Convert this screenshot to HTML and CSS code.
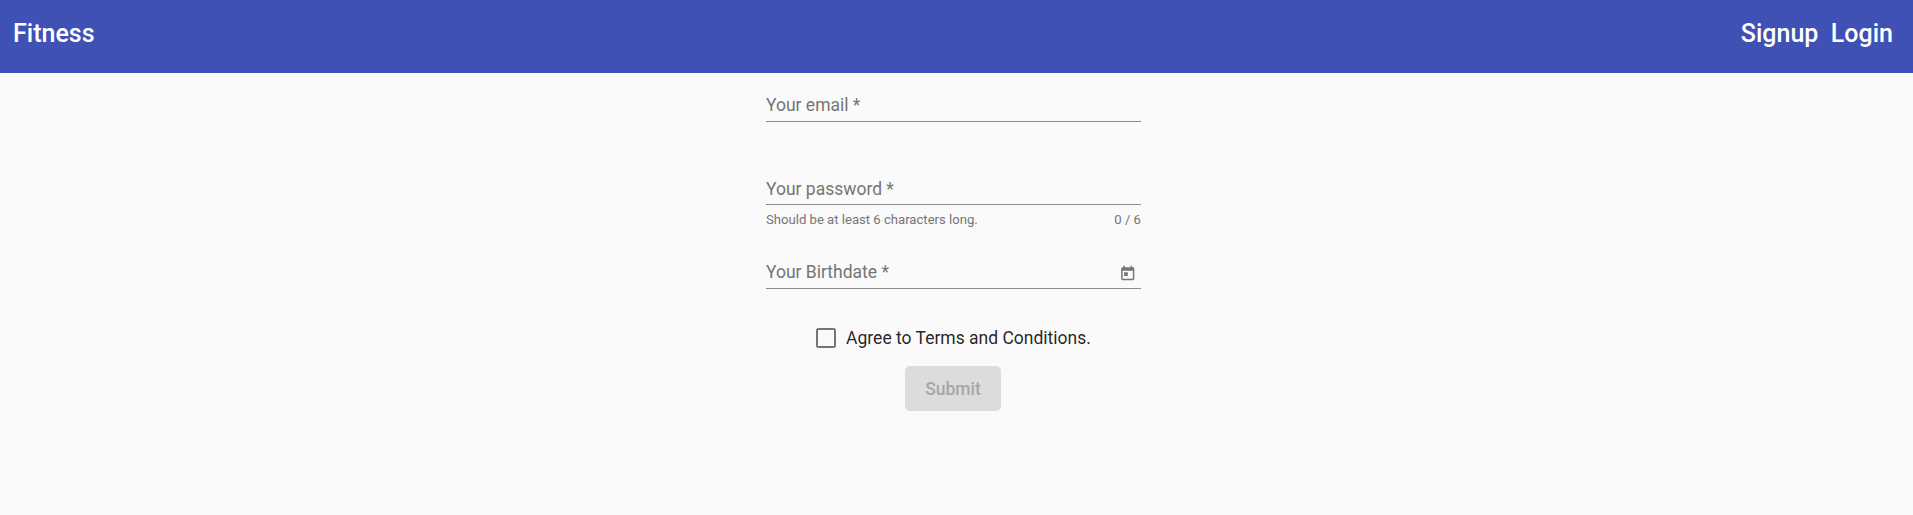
FILE: index.html
```html
<!DOCTYPE html>
<html lang="en">
<head>
<meta charset="utf-8">
<title>Fitness</title>
<link rel="stylesheet" href="styles.css">
</head>
<body>
<header class="toolbar">
  <a class="brand">Fitness</a>
  <nav class="links"><a>Signup</a><a>Login</a></nav>
</header>
<main>
  <form class="form">
    <div class="field">
      <div class="control"><label>Your email *</label></div>
      <div class="hints"></div>
    </div>
    <div class="field password">
      <div class="control"><label>Your password *</label></div>
      <div class="hints"><span>Should be at least 6 characters long.</span><span>0 / 6</span></div>
    </div>
    <div class="field">
      <div class="control">
        <label>Your Birthdate *</label>
        <svg class="calendar" viewBox="0 0 24 24"><path d="M19 3h-1V1h-2v2H8V1H6v2H5c-1.11 0-1.99.9-1.99 2L3 19c0 1.1.89 2 2 2h14c1.1 0 2-.9 2-2V5c0-1.1-.9-2-2-2zm0 16H5V8h14v11zM7 10h5v5H7z"/></svg>
      </div>
    </div>
    <label class="terms"><span class="box"></span><span>Agree to Terms and Conditions.</span></label>
    <button class="submit" type="button" disabled>Submit</button>
  </form>
</main>
</body>
</html>
```
FILE: styles.css
```css
* { box-sizing: border-box; }
body {
  margin: 0;
  min-height: 100vh;
  background: #fafafa;
  font-family: Roboto, "Liberation Sans", sans-serif;
  font-size: 17.5px;
  line-height: 20px;
}
.toolbar {
  display: flex;
  justify-content: space-between;
  height: 73px;
  padding: 19px 20px 0 13px;
  background: #3f51b5;
  color: #fff;
  font-size: 25px;
  font-weight: 500;
  line-height: 30px;
}
.links { display: flex; gap: 12.5px; }
.form {
  display: flex;
  flex-direction: column;
  align-items: center;
  width: 375px;
  margin: 0 0 0 766px;
  padding-top: 22px;
}
.field { width: 100%; color: #757575; }
.control {
  display: flex;
  justify-content: space-between;
  height: 27px;
  border-bottom: 1px solid #8c8c8c;
}
.password .control { padding-top: 1px; }
.calendar {
  width: 17.5px;
  height: 17.5px;
  margin: 3px 5px 0 0;
  fill: #757575;
}
.hints {
  display: flex;
  justify-content: space-between;
  height: 57px;
  padding-top: 7px;
  font-size: 13.125px;
  line-height: 16px;
}
.field:first-child .hints { height: 56px; }
.terms {
  display: flex;
  align-items: center;
  gap: 10px;
  height: 20px;
  margin-top: 39px;
  color: rgba(0, 0, 0, .87);
}
.box {
  width: 20px;
  height: 20px;
  border: 2px solid #757575;
  border-radius: 2.5px;
}
.submit {
  width: 96px;
  height: 45px;
  margin: 18px 1px 0 0;
  padding: 1px 0 0;
  border: 0;
  border-radius: 5px;
  background: #dcdcdc;
  color: #a6a6a6;
  font: 500 17.5px/44px Roboto, "Liberation Sans", sans-serif;
}
```
